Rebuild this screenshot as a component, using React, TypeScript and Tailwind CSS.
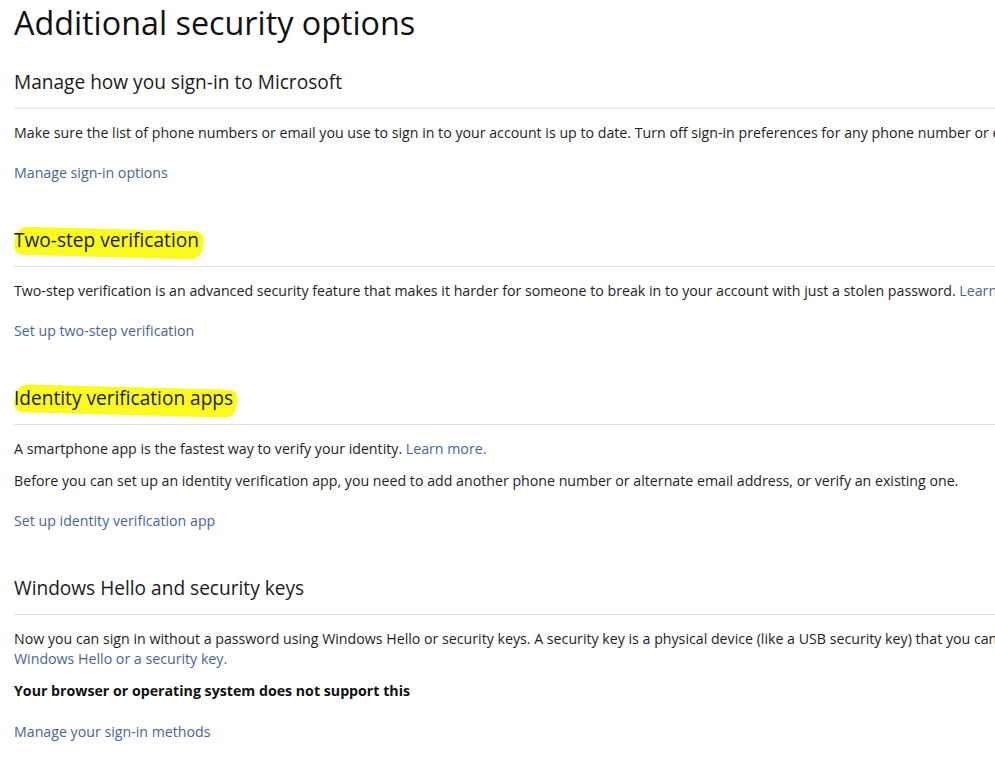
import React from 'react'

const font = { fontFamily: '"Segoe UI", "Open Sans", "Noto Sans", sans-serif' }

function Marker({ children }: { children: React.ReactNode }) {
  return (
    <span className="relative inline-block">
      <span className="absolute left-[1px] -right-[4px] top-[3px] bottom-[-3px] bg-[#fafa1c] rounded-[10px] rotate-[1.5deg] skew-x-[-8deg]" />
      <span className="relative">{children}</span>
    </span>
  )
}

function Section({ title, children }: { title: React.ReactNode; children: React.ReactNode }) {
  return (
    <section className="mb-[43px]">
      <h2 className="text-[19.1px] leading-[28px] text-[#1b1b1b] mb-[12px]">{title}</h2>
      <div className="h-px bg-[#e1e1e1] mb-[14px]" />
      {children}
    </section>
  )
}

const link = 'text-[#48659a]'

export default function App() {
  return (
    <div className="w-[995px] h-[757px] overflow-hidden bg-white whitespace-nowrap text-[14.2px] leading-[20px] text-[#1e1e1e]" style={font}>
      <div className="pl-[14px] pt-[2px] w-[1200px]">
        <h1 className="text-[32.3px] leading-[40px] text-[#111] mb-[26px]">Additional security options</h1>

        <Section title="Manage how you sign-in to Microsoft">
          <p className="mb-[20px]">
            Make sure the list of phone numbers or email you use to sign in to your account is up to date. Turn off sign-in preferences for any phone number or email you don't use.
          </p>
          <p className={link}>Manage sign-in options</p>
        </Section>

        <Section title={<Marker>Two-step verification</Marker>}>
          <p className="mb-[20px]">
            Two-step verification is an advanced security feature that makes it harder for someone to break in to your account with just a stolen password. <span className={link}>Learn more.</span>
          </p>
          <p className={link}>Set up two-step verification</p>
        </Section>

        <Section title={<Marker>Identity verification apps</Marker>}>
          <p className="mb-[12px]">
            A smartphone app is the fastest way to verify your identity. <span className={link}>Learn more.</span>
          </p>
          <p className="mb-[20px]">
            Before you can set up an identity verification app, you need to add another phone number or alternate email address, or verify an existing one.
          </p>
          <p className={link}>Set up identity verification app</p>
        </Section>

        <Section title="Windows Hello and security keys">
          <p>
            Now you can sign in without a password using Windows Hello or security keys. A security key is a physical device (like a USB security key) that you can use instead of a password. Learn more about
          </p>
          <p className={`${link} mb-[12px]`}>Windows Hello or a security key.</p>
          <p className="font-bold text-[#111] mb-[21px]">Your browser or operating system does not support this</p>
          <p className={link}>Manage your sign-in methods</p>
        </Section>
      </div>
    </div>
  )
}
